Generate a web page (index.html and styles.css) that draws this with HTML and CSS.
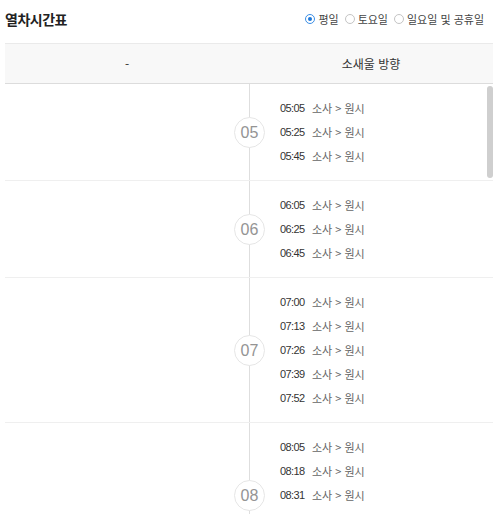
FILE: index.html
```html
<!DOCTYPE html>
<html lang="ko">
<head>
<meta charset="utf-8">
<link rel="stylesheet" href="styles.css">
</head>
<body>
<div class="page">
  <div class="top">
    <h2 class="title">열차시간표</h2>
    <div class="radios">
      <label class="radio on"><span class="dot"></span>평일</label>
      <label class="radio"><span class="dot"></span>토요일</label>
      <label class="radio"><span class="dot"></span>일요일 및 공휴일</label>
    </div>
  </div>
  <div class="table">
    <div class="thead">
      <div class="th">-</div>
      <div class="th">소새울 방향</div>
    </div>
    <div class="tbody">
      <div class="group"><div class="left"></div><div class="right"><span class="hour">05</span>
        <div class="line"><span class="time">05:05</span><span class="route">소사 &gt; 원시</span></div>
        <div class="line"><span class="time">05:25</span><span class="route">소사 &gt; 원시</span></div>
        <div class="line"><span class="time">05:45</span><span class="route">소사 &gt; 원시</span></div>
      </div></div>
      <div class="group"><div class="left"></div><div class="right"><span class="hour">06</span>
        <div class="line"><span class="time">06:05</span><span class="route">소사 &gt; 원시</span></div>
        <div class="line"><span class="time">06:25</span><span class="route">소사 &gt; 원시</span></div>
        <div class="line"><span class="time">06:45</span><span class="route">소사 &gt; 원시</span></div>
      </div></div>
      <div class="group"><div class="left"></div><div class="right"><span class="hour">07</span>
        <div class="line"><span class="time">07:00</span><span class="route">소사 &gt; 원시</span></div>
        <div class="line"><span class="time">07:13</span><span class="route">소사 &gt; 원시</span></div>
        <div class="line"><span class="time">07:26</span><span class="route">소사 &gt; 원시</span></div>
        <div class="line"><span class="time">07:39</span><span class="route">소사 &gt; 원시</span></div>
        <div class="line"><span class="time">07:52</span><span class="route">소사 &gt; 원시</span></div>
      </div></div>
      <div class="group"><div class="left"></div><div class="right"><span class="hour">08</span>
        <div class="line"><span class="time">08:05</span><span class="route">소사 &gt; 원시</span></div>
        <div class="line"><span class="time">08:18</span><span class="route">소사 &gt; 원시</span></div>
        <div class="line"><span class="time">08:31</span><span class="route">소사 &gt; 원시</span></div>
        <div class="line"><span class="time">08:44</span><span class="route">소사 &gt; 원시</span></div>
        <div class="line"><span class="time">08:57</span><span class="route">소사 &gt; 원시</span></div>
      </div></div>
      <div class="group"><div class="left"></div><div class="right"><span class="hour">09</span>
        <div class="line"><span class="time">09:10</span><span class="route">소사 &gt; 원시</span></div>
        <div class="line"><span class="time">09:25</span><span class="route">소사 &gt; 원시</span></div>
        <div class="line"><span class="time">09:40</span><span class="route">소사 &gt; 원시</span></div>
        <div class="line"><span class="time">09:55</span><span class="route">소사 &gt; 원시</span></div>
      </div></div>
      <div class="group"><div class="left"></div><div class="right"><span class="hour">10</span>
        <div class="line"><span class="time">10:15</span><span class="route">소사 &gt; 원시</span></div>
        <div class="line"><span class="time">10:35</span><span class="route">소사 &gt; 원시</span></div>
        <div class="line"><span class="time">10:55</span><span class="route">소사 &gt; 원시</span></div>
      </div></div>
      <div class="group"><div class="left"></div><div class="right"><span class="hour">11</span>
        <div class="line"><span class="time">11:15</span><span class="route">소사 &gt; 원시</span></div>
        <div class="line"><span class="time">11:35</span><span class="route">소사 &gt; 원시</span></div>
        <div class="line"><span class="time">11:55</span><span class="route">소사 &gt; 원시</span></div>
      </div></div>
      <div class="group"><div class="left"></div><div class="right"><span class="hour">12</span>
        <div class="line"><span class="time">12:15</span><span class="route">소사 &gt; 원시</span></div>
        <div class="line"><span class="time">12:35</span><span class="route">소사 &gt; 원시</span></div>
        <div class="line"><span class="time">12:55</span><span class="route">소사 &gt; 원시</span></div>
      </div></div>
      <div class="group"><div class="left"></div><div class="right"><span class="hour">13</span>
        <div class="line"><span class="time">13:15</span><span class="route">소사 &gt; 원시</span></div>
        <div class="line"><span class="time">13:35</span><span class="route">소사 &gt; 원시</span></div>
        <div class="line"><span class="time">13:55</span><span class="route">소사 &gt; 원시</span></div>
      </div></div>
      <div class="group"><div class="left"></div><div class="right"><span class="hour">14</span>
        <div class="line"><span class="time">14:15</span><span class="route">소사 &gt; 원시</span></div>
        <div class="line"><span class="time">14:35</span><span class="route">소사 &gt; 원시</span></div>
        <div class="line"><span class="time">14:55</span><span class="route">소사 &gt; 원시</span></div>
      </div></div>
      <div class="group"><div class="left"></div><div class="right"><span class="hour">15</span>
        <div class="line"><span class="time">15:15</span><span class="route">소사 &gt; 원시</span></div>
        <div class="line"><span class="time">15:35</span><span class="route">소사 &gt; 원시</span></div>
        <div class="line"><span class="time">15:55</span><span class="route">소사 &gt; 원시</span></div>
      </div></div>
      <div class="group"><div class="left"></div><div class="right"><span class="hour">16</span>
        <div class="line"><span class="time">16:15</span><span class="route">소사 &gt; 원시</span></div>
        <div class="line"><span class="time">16:35</span><span class="route">소사 &gt; 원시</span></div>
        <div class="line"><span class="time">16:55</span><span class="route">소사 &gt; 원시</span></div>
      </div></div>
      <div class="group"><div class="left"></div><div class="right"><span class="hour">17</span>
        <div class="line"><span class="time">17:10</span><span class="route">소사 &gt; 원시</span></div>
        <div class="line"><span class="time">17:25</span><span class="route">소사 &gt; 원시</span></div>
        <div class="line"><span class="time">17:40</span><span class="route">소사 &gt; 원시</span></div>
        <div class="line"><span class="time">17:55</span><span class="route">소사 &gt; 원시</span></div>
      </div></div>
      <div class="group"><div class="left"></div><div class="right"><span class="hour">18</span>
        <div class="line"><span class="time">18:05</span><span class="route">소사 &gt; 원시</span></div>
        <div class="line"><span class="time">18:18</span><span class="route">소사 &gt; 원시</span></div>
        <div class="line"><span class="time">18:31</span><span class="route">소사 &gt; 원시</span></div>
        <div class="line"><span class="time">18:44</span><span class="route">소사 &gt; 원시</span></div>
        <div class="line"><span class="time">18:57</span><span class="route">소사 &gt; 원시</span></div>
      </div></div>
      <div class="group"><div class="left"></div><div class="right"><span class="hour">19</span>
        <div class="line"><span class="time">19:10</span><span class="route">소사 &gt; 원시</span></div>
        <div class="line"><span class="time">19:23</span><span class="route">소사 &gt; 원시</span></div>
        <div class="line"><span class="time">19:36</span><span class="route">소사 &gt; 원시</span></div>
        <div class="line"><span class="time">19:49</span><span class="route">소사 &gt; 원시</span></div>
        <div class="line"><span class="time">19:59</span><span class="route">소사 &gt; 원시</span></div>
      </div></div>
      <div class="group"><div class="left"></div><div class="right"><span class="hour">20</span>
        <div class="line"><span class="time">20:10</span><span class="route">소사 &gt; 원시</span></div>
        <div class="line"><span class="time">20:25</span><span class="route">소사 &gt; 원시</span></div>
        <div class="line"><span class="time">20:40</span><span class="route">소사 &gt; 원시</span></div>
        <div class="line"><span class="time">20:55</span><span class="route">소사 &gt; 원시</span></div>
      </div></div>
      <div class="group"><div class="left"></div><div class="right"><span class="hour">21</span>
        <div class="line"><span class="time">21:15</span><span class="route">소사 &gt; 원시</span></div>
        <div class="line"><span class="time">21:35</span><span class="route">소사 &gt; 원시</span></div>
        <div class="line"><span class="time">21:55</span><span class="route">소사 &gt; 원시</span></div>
      </div></div>
      <div class="group"><div class="left"></div><div class="right"><span class="hour">22</span>
        <div class="line"><span class="time">22:15</span><span class="route">소사 &gt; 원시</span></div>
        <div class="line"><span class="time">22:35</span><span class="route">소사 &gt; 원시</span></div>
        <div class="line"><span class="time">22:55</span><span class="route">소사 &gt; 원시</span></div>
      </div></div>
      <div class="group"><div class="left"></div><div class="right"><span class="hour">23</span>
        <div class="line"><span class="time">23:15</span><span class="route">소사 &gt; 원시</span></div>
        <div class="line"><span class="time">23:40</span><span class="route">소사 &gt; 원시</span></div>
      </div></div>
    </div>
    <div class="thumb"></div>
  </div>
</div>
</body>
</html>
```
FILE: styles.css
```css
* { box-sizing: border-box; }
html, body { margin: 0; padding: 0; background: #fff; }
body {
  font-family: "Noto Sans CJK KR", "Noto Sans", sans-serif;
  color: #333;
  overflow: hidden;
}
.page {
  width: 500px;
  padding: 0 7px 0 5px;
}
.top {
  height: 43px;
  display: flex;
  align-items: center;
  justify-content: space-between;
  padding-bottom: 5px;
}
.title {
  margin: 0;
  font-size: 14px;
  font-weight: 700;
  color: #222;
  letter-spacing: -0.5px;
}
.radios {
  display: flex;
  align-items: center;
  gap: 6px;
  padding-right: 9px;
  font-size: 11px;
  color: #444;
}
.radio {
  display: flex;
  align-items: center;
  gap: 3px;
}
.dot {
  width: 10px;
  height: 10px;
  border-radius: 50%;
  border: 1px solid #c4c4c4;
  background: #fff;
  display: inline-flex;
  align-items: center;
  justify-content: center;
}
.radio.on .dot { border-color: #3a8ee6; }
.radio.on .dot::after {
  content: "";
  width: 4px;
  height: 4px;
  border-radius: 50%;
  background: #1e78d8;
}
.table {
  position: relative;
  border-top: 1px solid #eaeaea;
}
.thead {
  display: grid;
  grid-template-columns: 244px 1fr;
  height: 40px;
  background: #f8f8f8;
  border-bottom: 1px solid #dcdcdc;
}
.th {
  display: flex;
  align-items: center;
  justify-content: center;
  font-size: 12px;
  color: #333;
}
.tbody {
  height: 430px;
  overflow-y: scroll;
  scrollbar-width: none;
}
.tbody::-webkit-scrollbar { width: 0; height: 0; }
.thumb {
  position: absolute;
  right: 0;
  top: 42px;
  width: 6px;
  height: 92px;
  border-radius: 3px;
  background: #cfcfcf;
}
.group {
  display: flex;
  border-bottom: 1px solid #efefef;
}
.left {
  width: 244px;
  flex: none;
}
.right {
  position: relative;
  flex: 1;
  border-left: 1px solid #dedede;
  padding: 12px 0 12px 30px;
}
.hour {
  position: absolute;
  left: -16px;
  top: 50%;
  margin-top: -15px;
  width: 31px;
  height: 31px;
  border-radius: 50%;
  border: 1px solid #e6e6e6;
  background: #fff;
  display: flex;
  align-items: center;
  justify-content: center;
  font-family: "Liberation Sans", Arial, sans-serif;
  font-size: 16px;
  color: #949494;
}
.line {
  height: 24px;
  display: flex;
  align-items: center;
  font-size: 11px;
}
.time {
  font-family: "Liberation Sans", Arial, sans-serif;
  font-size: 11px;
  letter-spacing: -0.6px;
  color: #333;
  width: 32px;
}
.route {
  color: #666;
  font-size: 11px;
}
```
